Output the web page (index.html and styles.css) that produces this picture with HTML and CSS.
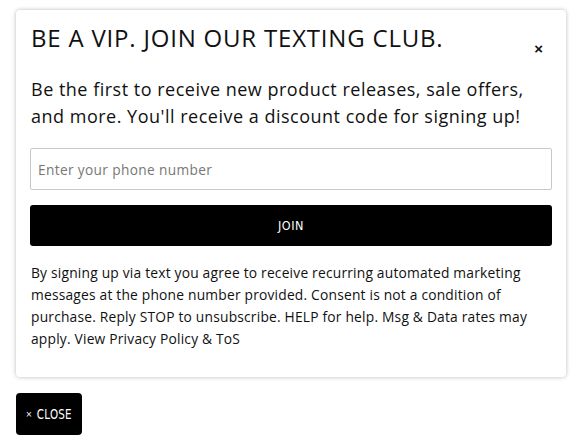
FILE: index.html
```html
<!DOCTYPE html>
<html>
<head>
<meta charset="utf-8">
<link rel="stylesheet" href="styles.css">
</head>
<body>
<div class="card">
  <div class="head">
    <h1 class="title">BE A VIP. JOIN OUR TEXTING CLUB.</h1>
    <button class="x" aria-label="close">×</button>
  </div>
  <p class="lead">Be the first to receive new product releases, sale offers, and more. You'll receive a discount code for signing up!</p>
  <input class="phone" type="tel" placeholder="Enter your phone number">
  <button class="join">JOIN</button>
  <p class="legal">By signing up via text you agree to receive recurring automated marketing messages at the phone number provided. Consent is not a condition of purchase. Reply STOP to unsubscribe. HELP for help. Msg &amp; Data rates may apply. View Privacy Policy &amp; ToS</p>
</div>
<button class="close"><span class="cx">×</span><span class="cond">CLOSE</span></button>
</body>
</html>
```
FILE: styles.css
```css
* { box-sizing: border-box; }
body {
  margin: 0;
  padding: 10px 19px 0 16px;
  background: #fff;
  font-family: "Open Sans", sans-serif;
  color: #111;
}
.card {
  width: 550px;
  height: 367px;
  background: #fff;
  border-radius: 4px;
  box-shadow: 0 0 4px rgba(0,0,0,0.28);
  padding: 12px 14px 0 14px;
}
.head {
  display: flex;
  justify-content: space-between;
  align-items: flex-start;
}
.title {
  margin: 0 0 0 1px;
  font-weight: 400;
  font-size: 24px;
  letter-spacing: 0.8px;
  line-height: 32px;
}
.x {
  border: 0;
  background: none;
  padding: 0;
  margin: 22px 9px 0 0;
  font-size: 15px;
  font-weight: 700;
  line-height: 10px;
  color: #111;
}
.lead {
  margin: 22px 0 0 1px;
  font-size: 18px;
  line-height: 27px;
  letter-spacing: 0.5px;
}
.phone {
  display: block;
  width: 522px;
  height: 42px;
  margin: 18px 0 0 0;
  border: 1px solid #c9c9c9;
  border-radius: 2px;
  padding: 0 7px;
  font-family: "Open Sans", sans-serif;
  font-size: 13.7px;
  letter-spacing: 0.35px;
  color: #111;
}
.phone::placeholder { color: #777; }
.join {
  display: block;
  width: 522px;
  height: 41px;
  margin-top: 15px;
  border: 0;
  border-radius: 3px;
  background: #000;
  color: #fff;
  font-family: "Liberation Sans Narrow", "DejaVu Sans Condensed", sans-serif;
  font-size: 12.5px;
  letter-spacing: 0.5px;
}
.legal {
  margin: 16px 0 0 1px;
  font-size: 13.8px;
  line-height: 22px;
  letter-spacing: 0.2px;
}
.close {
  display: flex;
  align-items: center;
  justify-content: center;
  gap: 3px;
  margin-top: 16px;
  width: 66px;
  height: 42px;
  border: 0;
  border-radius: 4px;
  background: #000;
  color: #fff;
  font-family: "Liberation Sans Narrow", "DejaVu Sans Condensed", sans-serif;
  font-size: 14px;
  letter-spacing: 0.3px;
  padding: 0;
}
.cond { display: inline-block; transform: scaleX(0.82); margin: 0 -3px; }
.cx { font-size: 9px; }
```
